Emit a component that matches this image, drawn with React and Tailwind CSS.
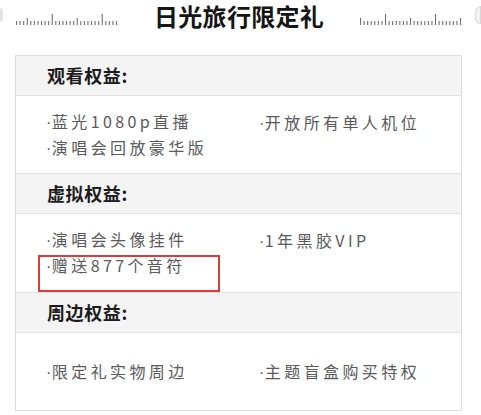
const sections = [
  {
    title: "观看权益:",
    body: 78,
    items: [["蓝光1080p直播", "演唱会回放豪华版"], ["开放所有单人机位"]],
  },
  {
    title: "虚拟权益:",
    body: 79,
    items: [["演唱会头像挂件", "赠送877个音符"], ["1年黑胶VIP"]],
  },
  {
    title: "周边权益:",
    body: 77,
    items: [["限定礼实物周边"], ["主题盲盒购买特权"]],
  },
];

function Ruler({ tall, mid, count = 29 }) {
  return (
    <svg width="104" height="14" viewBox="0 0 104 14">
      {[...Array(count)].map((_, i) => {
        const h = tall.includes(i) ? 11 : mid.includes(i) ? 7 : 4;
        return (
          <rect key={i} x={1 + i * 3.57} y={14 - h} width="1.1" height={h} fill="#707070" />
        );
      })}
    </svg>
  );
}

export default function App() {
  return (
    <div
      className="relative w-[481px] h-[415px] overflow-hidden bg-white"
      style={{ fontFamily: '"Noto Sans CJK SC", "Noto Sans", sans-serif' }}
    >
      {/* edge bits from the neighbouring screen */}
      <div className="absolute left-0 top-[8px] w-[3px] h-[14px] rounded-r bg-[#e4e4e4]" />
      <div className="absolute right-0 top-[6px] w-[6px] h-[18px] rounded-l-md border border-[#d8d8d8] bg-[#f2f2f2]" />

      {/* title row */}
      <div className="flex h-[31px] items-center gap-[35px] pl-[15px] pt-[1px]">
        <div className="shrink-0 pt-[4px]">
          <Ruler tall={[10, 24]} mid={[3, 17]} />
        </div>
        <h1 className="shrink-0 whitespace-nowrap text-center text-[24px] font-bold leading-[30px] tracking-[0.3px] text-[#151515]">
          日光旅行限定礼
        </h1>
        <div className="shrink-0 pt-[4px]">
          <Ruler tall={[7, 21]} mid={[0, 14, 28]} />
        </div>
      </div>

      {/* benefits card */}
      <div className="mt-[24px] ml-[15px] w-[447px] border border-[#dedede]">
        {sections.map((s, si) => (
          <div key={si}>
            <div className="flex h-[40px] items-center border-b border-[#e3e3e3] bg-[#f4f4f4] pl-[31px] text-[18px] font-bold tracking-[0.6px] text-[#1c1c1c]">
              {s.title}
            </div>
            <div
              className={`grid grid-cols-[213px_1fr] items-center pl-[30px] text-[16px] leading-[24px] tracking-[3.4px] text-[#5a5a5a] ${
                si < sections.length - 1 ? "border-b border-[#e3e3e3]" : ""
              }`}
              style={{ height: s.body }}
            >
              {s.items.map((col, ci) => (
                <div key={ci} className="self-center">
                  {col.map((t) => (
                    <div key={t} className="whitespace-nowrap">
                      <span className="font-['Liberation_Sans'] tracking-[0.5px]">·</span>
                      {t}
                    </div>
                  ))}
                  {col.length < s.items[0].length && <div>&nbsp;</div>}
                </div>
              ))}
            </div>
          </div>
        ))}
      </div>

      {/* red annotation box */}
      <div className="absolute left-[38px] top-[255px] w-[182px] h-[37px] border-2 border-[#e23a3a]" />
    </div>
  );
}
